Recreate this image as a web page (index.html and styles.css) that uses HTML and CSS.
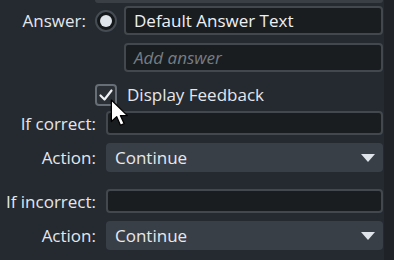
FILE: index.html
```html
<!DOCTYPE html>
<html>
<head>
<meta charset="utf-8">
<link rel="stylesheet" href="styles.css">
</head>
<body>
<div class="panel">
  <div class="prev"></div>
  <div class="row answer-row">
    <span class="label short">Answer:</span>
    <span class="radio"><span class="dot"></span></span>
    <div class="input wide">Default Answer Text</div>
  </div>
  <div class="row add-row">
    <div class="input wide placeholder">Add answer</div>
  </div>
  <div class="row check-row">
    <span class="checkbox">
      <svg width="18" height="18" viewBox="0 0 18 18"><path d="M3.5 9.5 L7.5 13.5 L14.5 4.5" fill="none" stroke="#eef1f5" stroke-width="2.2" stroke-linecap="round" stroke-linejoin="round"/></svg>
    </span>
    <span class="check-label">Display Feedback</span>
    <svg class="cursor" width="22" height="30" viewBox="0 0 20 28"><path d="M1 1 L1 21 L6 16.5 L9.5 24.5 L13 23 L9.5 15.5 L16 15.5 Z" fill="#ffffff" stroke="#000000" stroke-width="1.2" stroke-linejoin="round"/></svg>
  </div>
  <div class="row field-row first-field">
    <span class="label">If correct:</span>
    <div class="input field"></div>
  </div>
  <div class="row select-row">
    <span class="label">Action:</span>
    <div class="select"><span>Continue</span><span class="caret"></span></div>
  </div>
  <div class="row field-row second-field">
    <span class="label">If incorrect:</span>
    <div class="input field"></div>
  </div>
  <div class="row select-row">
    <span class="label">Action:</span>
    <div class="select"><span>Continue</span><span class="caret"></span></div>
  </div>
</div>
</body>
</html>
```

FILE: styles.css
```css
html, body {
  margin: 0;
  padding: 0;
  background: #1f2227;
  height: 260px;
  overflow: hidden;
}
.panel {
  width: 384px;
  height: 260px;
  background: #252930;
  font-family: "Open Sans", "Liberation Sans", sans-serif;
  font-size: 17px;
  color: #e3e7ec;
  display: flex;
  flex-direction: column;
}
.prev {
  margin-left: 95px;
  width: 288px;
  height: 3px;
  background: #3a3f46;
  border-radius: 0 0 3px 3px;
}
.row {
  display: flex;
  align-items: center;
}
.label {
  width: 96px;
  text-align: right;
  flex: none;
  margin-right: 10px;
  white-space: nowrap;
}
.label.short {
  width: 86px;
  margin-right: 9px;
}
.answer-row {
  margin-top: 3px;
}
.radio {
  width: 22px;
  height: 22px;
  box-sizing: border-box;
  border: 2px solid #464c53;
  border-radius: 50%;
  background: #15181b;
  display: flex;
  align-items: center;
  justify-content: center;
  margin-right: 7px;
  flex: none;
}
.dot {
  width: 12px;
  height: 12px;
  border-radius: 50%;
  background: #dfe3ea;
}
.input {
  box-sizing: border-box;
  border: 2px solid #42484e;
  border-radius: 4px;
  background: #1a1d20;
  color: #eef0f3;
  display: flex;
  align-items: center;
  padding-left: 8px;
}
.input.wide {
  width: 259px;
  height: 29px;
}
.add-row {
  margin-top: 8px;
  padding-left: 124px;
}
.placeholder {
  color: #767d84;
  font-style: italic;
}
.check-row {
  margin-top: 12px;
  padding-left: 95px;
  position: relative;
  height: 22px;
}
.checkbox {
  width: 22px;
  height: 22px;
  box-sizing: border-box;
  border: 2px solid #686e75;
  border-radius: 4px;
  background: #2b2f36;
  display: flex;
  align-items: center;
  justify-content: center;
  flex: none;
}
.check-label {
  margin-left: 10px;
  margin-top: -2px;
}
.cursor {
  position: absolute;
  left: 110px;
  top: 15px;
}
.first-field {
  margin-top: 5px;
}
.second-field {
  margin-top: 17px;
}
.input.field {
  width: 277px;
  height: 24px;
}
.select-row {
  margin-top: 8px;
}
.select {
  width: 277px;
  height: 29px;
  box-sizing: border-box;
  background: #393f47;
  border-radius: 4px;
  display: flex;
  align-items: center;
  justify-content: space-between;
  padding: 0 8px 0 9px;
  color: #e6e9ee;
}
.caret {
  width: 0;
  height: 0;
  border-left: 7px solid transparent;
  border-right: 7px solid transparent;
  border-top: 8px solid #dfe3ea;
}
```
